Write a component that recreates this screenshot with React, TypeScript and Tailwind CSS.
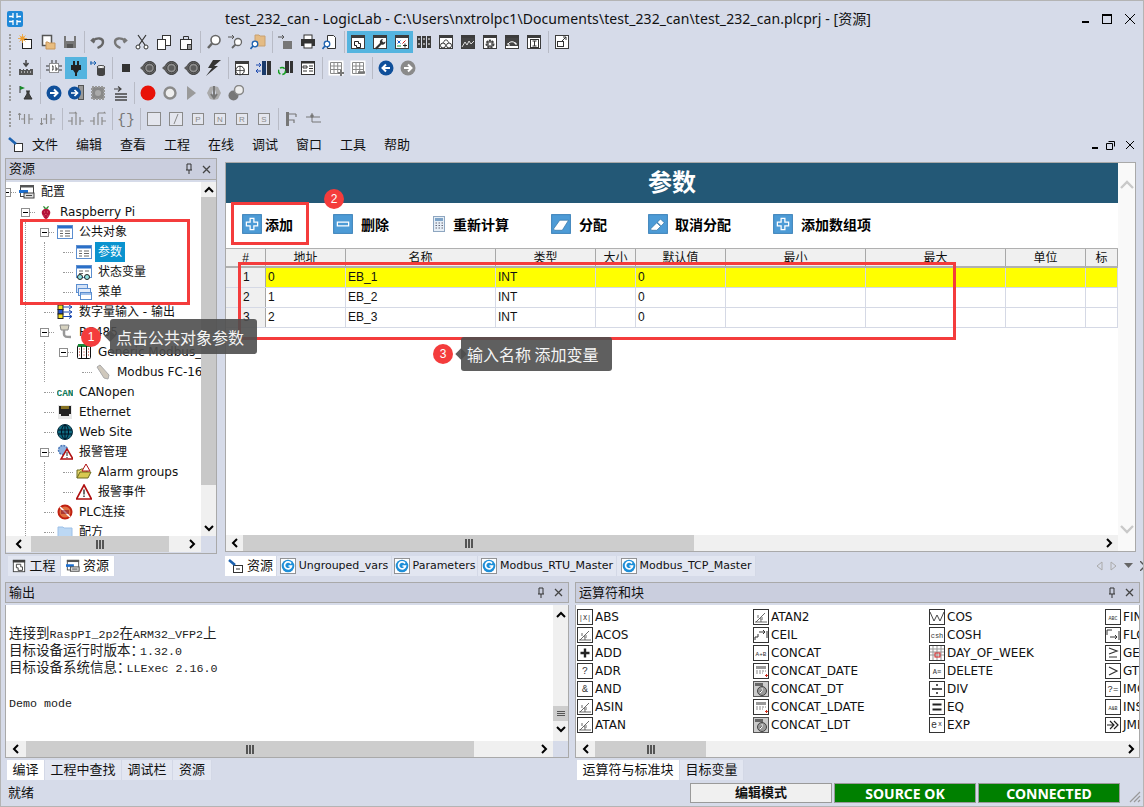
import React, { ReactNode } from "react";

const S = ({ c, size = 16 }: { c: ReactNode; size?: number }) => (
  <svg width={size} height={size} viewBox="0 0 16 16" className="block shrink-0">{c}</svg>
);
const D = "#3c3c3c";
const G = "#8a8a8a";
const win = (extra: ReactNode) => (
  <>
    <rect x="1.5" y="1.5" width="13" height="13" fill="#fff" stroke={D} />
    <rect x="1" y="1" width="14" height="3" fill={D} />
    {extra}
  </>
);
const gridI = (extra: ReactNode) => (
  <>
    <rect x="1" y="1" width="14" height="14" fill="#fff" stroke="#fff" />
    <path d="M2.5 2.5h11v11h-11zM2.5 6h11M2.5 9.5h11M6 2.5v11M9.7 2.5v11" fill="none" stroke={G} />
    {extra}
  </>
);
const disc = (
  <>
    <circle cx="9.500" cy="8" r="6.500" fill="#666" stroke="#333" />
    <circle cx="9.500" cy="8" r="4.800" fill="#8e8e8e" stroke="#333" strokeWidth=".8" />
    <circle cx="9.500" cy="8" r="2.800" fill="#5c5c5c" />
    <path d="M0 8l4-3.500v7z" fill="#5c5c5c" />
  </>
);
const lever = () => (
  <path d="M3 8h3.500M6.500 3v10M11 3v10M11 8h4" fill="none" stroke={G} strokeWidth="1.200" />
);
const boxL = (t: string) => (
  <>
    <rect x="2.5" y="2.5" width="11" height="11" fill="#e4e6ee" stroke={G} />
    <text x="8" y="11.3" fontSize="8" textAnchor="middle" fill={G} fontFamily="Liberation Sans">{t}</text>
  </>
);
const book = (
  <>
    <rect x="1" y="2" width="4" height="12" fill={D} />
    <rect x="6" y="2" width="4" height="12" fill={D} />
    <rect x="11" y="2" width="4" height="12" fill={D} />
    <path d="M2 10h2M7 10h2M12 10h2M2 5h2M7 5h2M12 5h2" stroke="#fff" />
  </>
);
const icons: Record<string, ReactNode> = {
  new: <><rect x="4.5" y="5.5" width="9" height="9" fill="#fff" stroke="#222" /><circle cx="4.5" cy="4.5" r="2.2" fill="#f0a030" /><path d="M4.5 0v9M0 4.5h9M1.5 1.5l6 6M7.5 1.5l-6 6" stroke="#f0a030" strokeWidth=".8" /></>,
  open: <><rect x="2.5" y="1.5" width="9" height="10" fill="#fff" stroke="#555" strokeWidth="1.5" /><path d="M6 8h2l1 1h6v6H6z" fill="#e8bd80" stroke="#c8965a" /></>,
  save: <><path d="M2 2h12v12H2z" fill="#777" /><rect x="4" y="2" width="8" height="5" fill="#d8dce8" /><rect x="5" y="10" width="6" height="4" fill="#555" /></>,
  undo: <path d="M4 4.5l-2 2 2.5 2M3 6.5c4-3 10-3 10 1.500 0 3-3 5-5.500 6" fill="none" stroke="#666" strokeWidth="2.400" />,
  redo: <path d="M12 4.5l2 2-2.500 2M13 6.500c-4-3-10-3-10 1.500 0 3 3 5 5.500 6" fill="none" stroke="#777" strokeWidth="2.400" />,
  cut: <><path d="M4 1l7 10M12 1L5 11" stroke="#333" fill="none" strokeWidth="1.200" /><circle cx="4" cy="13" r="2" fill="#fff" stroke="#333" /><circle cx="12" cy="13" r="2" fill="#fff" stroke="#333" /></>,
  copy: <><rect x="6.500" y="1.500" width="8" height="10" fill="#fff" stroke="#333" /><rect x="1.500" y="5.500" width="8" height="10" fill="#fff" stroke="#333" /></>,
  paste: <><rect x="2.500" y="5.500" width="11" height="10" fill="#fff" stroke="#333" /><path d="M5.500 6V2.500h5V6" fill="none" stroke="#333" /><rect x="9.500" y="10.500" width="4" height="5" fill="#999" stroke="#333" /></>,
  find: <><circle cx="9.500" cy="6" r="4.500" fill="#fff" stroke="#666" strokeWidth="1.600" /><path d="M6 9.500L2 14" stroke="#666" strokeWidth="2.500" /></>,
  findn: <><path d="M0 3h6M4 1l2 2-2 2" stroke="#555" fill="none" /><circle cx="10" cy="8" r="3.500" fill="#fff" stroke="#666" strokeWidth="1.300" /><path d="M7.500 10.500L4 14" stroke="#666" strokeWidth="1.800" /></>,
  findf: <><path d="M5 1h4l1 1h5v10H5z" fill="#e4bb84" stroke="#c8a070" /><circle cx="5" cy="10" r="2.800" fill="#fff" stroke="#1c62b0" strokeWidth="1.300" /><path d="M3 12l-2.500 3" stroke="#1c62b0" strokeWidth="1.600" /></>,
  imp: <><path d="M0 3h6M4 1l2 2-2 2" stroke="#555" fill="none" /><rect x="5" y="7" width="9" height="8" fill="#777" /></>,
  print: <><rect x="4" y="1" width="8" height="5" fill="#fff" stroke="#333" /><rect x="1" y="5" width="14" height="7" fill="#333" /><rect x="4" y="9" width="8" height="5" fill="#fff" stroke="#333" /></>,
  prev: <><path d="M5.500 1.500h6l2 2v11h-8z" fill="#fff" stroke="#333" /><circle cx="5" cy="10" r="2.800" fill="#fff" stroke="#1c62b0" strokeWidth="1.300" /><path d="M3 12l-2.500 3" stroke="#1c62b0" strokeWidth="1.600" /></>,
  wA: win(<path d="M4.500 7.500h4v2h2v4h-4v-2h-2z" fill="#fff" stroke="#222" />),
  wB: win(<path d="M11 5a3 3 0 0 0-3 4l-5 5 1.500 1.500 5-5a3 3 0 0 0 4-3l-2 1-1.500-1.500z" fill="#333" />),
  wC: win(<><path d="M3.500 6.500l3 3M6.500 6.500l-3 3" stroke="#1c5cd0" /><path d="M8.500 9.500l3-3" stroke="#d02020" /><path d="M3 12h4" stroke="#10a040" /><path d="M9 11.500h4M11 9.500v4" stroke="#222" /></>),
  books: book,
  wGl: win(<><circle cx="5" cy="11.500" r="2.500" fill="#fff" stroke="#333" /><circle cx="11" cy="11.500" r="2.500" fill="#fff" stroke="#333" /><path d="M5 9l2-3h2l2 3" fill="none" stroke="#555" /></>),
  wCh: win(<><rect x="2" y="4" width="12" height="10" fill="#444" /><path d="M2 13l3-5 2 3 2-4 2 3 3-3" fill="none" stroke="#ddd" /></>),
  wG: win(<><circle cx="8" cy="10" r="3.500" fill="#777" stroke="#444" strokeDasharray="2 1" strokeWidth="2" /><circle cx="8" cy="10" r="1.200" fill="#fff" /></>),
  wS: win(<><rect x="2" y="4" width="12" height="8" fill="#444" /><path d="M4 10c2-3 6-3 8 0M4 9v2h2M12 11v-2h-2" fill="none" stroke="#fff" /></>),
  wI: win(<><rect x="4.500" y="5.500" width="8" height="8" fill="#fff" stroke="#333" /><path d="M6.500 7h4M6.500 12h4M8.500 7v5" stroke="#333" /></>),
  ext: <><rect x="1.500" y="1.500" width="13" height="13" fill="#fff" stroke={D} /><rect x="3.500" y="7.500" width="6" height="5" fill="none" stroke="#333" /><path d="M8 7l4-4M9 3h3v3" fill="none" stroke="#333" /></>,
  dl: <><path d="M8 0v5M5.500 3L8 6l2.500-3" stroke="#444" fill="none" strokeWidth="1.500" /><path d="M1 15V9h2v1h2V9h1v1h2V9h2v1h2V9h3v6z" fill="#555" /><path d="M3 12h1M6 12h1M9 12h1M12 12h1" stroke="#fff" /></>,
  chip: <><rect x="3.500" y="3.500" width="9" height="9" fill="#fff" stroke="#333" strokeDasharray="1 1" /><path d="M0 6h3M0 10h3M13 6h3M13 10h3M6 0v3M10 0v3" stroke="#333" /><path d="M6 6h1v4H6M9 6h1M9 8h2v2H9" fill="none" stroke="#333" /></>,
  plug: <><rect x="3" y="5" width="10" height="5" fill="#222" /><rect x="5" y="1" width="2" height="4" fill="#222" /><rect x="9" y="1" width="2" height="4" fill="#222" /><path d="M5 10h6l-2 3v3H7v-3z" fill="#222" /></>,
  cyl: <><path d="M0 3h6M4 1l2 2-2 2M1 1v4" stroke="#1c62b0" fill="none" /><path d="M7 7h8v7a4 2 0 0 1-8 0z" fill="#444" /><ellipse cx="11" cy="7" rx="4" ry="1.500" fill="#fff" stroke="#444" /></>,
  stop: <rect x="4" y="4" width="8" height="8" fill="#333" />,
  disc,
  bolt: <path d="M15 0H7L2 8h4L0 16l12-10H8z" fill="#333" />,
  wWeb: win(<><circle cx="6" cy="10.500" r="4.300" fill="#fff" stroke="#222" /><path d="M1.700 10.500h8.600M6 6.200v8.600" stroke="#222" strokeWidth=".7" /></>),
  bBlue: <><rect x="6" y="1" width="4" height="14" fill="#1a3a6a" /><rect x="11" y="1" width="4" height="14" fill="#333" /><path d="M0 5h5M3 3L5 5l-2 2M5 11H0M2 9l-2 2 2 2" stroke="#1c4ab0" fill="none" /></>,
  bGreen: <><rect x="7" y="1" width="4" height="12" fill="#333" /><rect x="12" y="1" width="3" height="12" fill="#333" /><circle cx="4" cy="11" r="3.500" fill="none" stroke="#14a020" strokeWidth="1.500" strokeDasharray="5 2" /></>,
  form: <><rect x="1.500" y="1.500" width="13" height="13" fill="#fff" stroke="#333" /><rect x="1" y="1" width="14" height="2.500" fill="#333" /><path d="M3 6h4v2H3zM9 6h4M9 8.500h4M3 11h4M9 11h4" stroke="#333" fill="none" /></>,
  gridP: gridI(<path d="M10 13h6M13 10v6" stroke="#777" strokeWidth="2" />),
  gridM: gridI(<path d="M8 12.500h7" stroke="#777" strokeWidth="2.500" />),
  back: <><circle cx="8" cy="8" r="7.500" fill="#0f4f9a" /><path d="M12 8H5M8 4.500L4.500 8 8 11.500" stroke="#fff" strokeWidth="2" fill="none" /></>,
  fwd: <><circle cx="8" cy="8" r="7.500" fill="#8a8a8a" /><path d="M4 8h7M8 4.500L11.500 8 8 11.500" stroke="#fff" strokeWidth="2" fill="none" /></>,
  flask: <><path d="M2 1v7" stroke="#333" /><path d="M2 1l5 2-5 2z" fill="#1a8a2a" /><path d="M8 6h4M9 6v3l-3 5h8l-3-5V6" fill="#444" stroke="#333" /></>,
  fwdB: <><circle cx="8" cy="8" r="7.500" fill="#0f4f9a" /><path d="M4 8h7M8 4.500L11.500 8 8 11.500" stroke="#fff" strokeWidth="2" fill="none" /></>,
  fwdBar: <><rect x="10" y="0" width="6" height="15" fill="#555" /><rect x="11" y="1" width="4" height="13" fill="#999" /><circle cx="6.500" cy="8" r="6.500" fill="#0f4f9a" /><path d="M3 8h6M6.500 5L9.500 8 6.500 11" stroke="#fff" strokeWidth="1.700" fill="none" /></>,
  chipG: <><rect x="2" y="2" width="12" height="12" fill="#888" stroke="#999" strokeDasharray="2 1" strokeWidth="2" /><circle cx="8" cy="8" r="3" fill="#aaa" /></>,
  listA: <><path d="M2 4h7M6 1.500L9 4 6 6.500" stroke="#444" fill="none" strokeWidth="1.200" /><path d="M3 9h12M3 12h12M3 15h12" stroke="#444" strokeWidth="1.400" /></>,
  rec: <circle cx="8" cy="8" r="7.500" fill="#e81208" />,
  ring: <circle cx="8" cy="8" r="5.500" fill="#eee" stroke="#8a8a8a" strokeWidth="2.400" />,
  play: <path d="M3 1l9 7-9 7z" fill="#9a9a9a" />,
  into: <><path d="M4 2l-3 6 3 6 4 1-2-7 2-7z" fill="#aaa" /><path d="M12 2l3 6-3 6-4 1 2-7-2-7z" fill="#aaa" /><path d="M8 1v11M5 9l3 4 3-4" stroke="#777" fill="none" strokeWidth="2" /></>,
  balls: <><circle cx="5.500" cy="10.500" r="5" fill="#777" /><circle cx="11" cy="5" r="4.500" fill="#eee" stroke="#888" strokeWidth="1.500" /></>,
  c1: <>{lever()}<path d="M1.500 9V2M0 4l1.500-2L3 4" stroke={G} fill="none" /></>,
  c2: <>{lever()}<path d="M1.500 7v7M0 12l1.500 2L3 12" stroke={G} fill="none" /></>,
  c3: <path d="M1 2h7l-1-1M8 2V14M4 6v8M12 6v8M0 10h4M12 10h4" stroke={G} fill="none" strokeWidth="1.200" />,
  c4: <path d="M8 2h7l-1-1M8 2V14M4 6v8M12 6v8M0 10h4M12 10h4" stroke={G} fill="none" strokeWidth="1.200" />,
  brace: <text x="8" y="13" fontSize="15" textAnchor="middle" fill="#777" fontFamily="Liberation Mono">{"{}"}</text>,
  bEmpty: <rect x="1.500" y="1.500" width="13" height="13" fill="#e4e6ee" stroke={G} />,
  bSlash: <><rect x="1.500" y="1.500" width="13" height="13" fill="#e4e6ee" stroke={G} /><path d="M6 13l4-10" stroke={G} /></>,
  bP: boxL("P"), bN: boxL("N"), bR: boxL("R"), bS: boxL("S"),
  brk: <><rect x="2" y="1" width="3" height="14" fill="#777" /><path d="M5 3h7M12 3v3M5 9h5v3" stroke="#777" fill="none" strokeWidth="1.200" /></>,
  brk2: <><circle cx="6" cy="5" r="1.800" fill="#777" /><path d="M6 2v9h9M0 6h14" stroke="#777" fill="none" /></>,
};

const R1 = ["new","open","save","|","undo","redo","cut","copy","paste","|","find","findn","findf","|","imp","print","prev","|","*wA","*wB","*wC","books","wGl","wCh","wG","wS","wI","|","ext"];
const R2 = ["dl","|","chip","*plug","cyl","|","stop","disc","disc","disc","bolt","|","wWeb","bBlue","bGreen","form","|","gridP","gridM","|","back","fwd"];
const R3 = ["flask","|","fwdB","fwdBar","chipG","listA","|","rec","ring","play","into","balls"];
const R4 = ["c1","c2","|","c3","c4","|","brace","|","bEmpty","bSlash","bP","bN","bR","bS","|","brk","brk2"];

const Toolbar = ({ items, cls }: { items: string[]; cls: string }) => (
  <div className={"flex h-[22px] items-stretch pl-[8px] " + cls}>
    <div className="w-[4px] mr-[2px] my-[3px] border-l-2 border-dotted border-[#9a9a9a]" />
    {items.map((it, i) =>
      it === "|" ? (
        <div key={i} className="w-[6px] flex justify-center"><div className="w-px bg-[#b8bbc6]" /></div>
      ) : (
        <div key={i} className={"w-[22px] flex items-center justify-center " + (it[0] === "*" ? "bg-[#54b4df]" : "")}>
          <S c={icons[it.replace("*", "")]} />
        </div>
      )
    )}
  </div>
);

const tIcons: Record<string, ReactNode> = {
  config: <><rect x="1.500" y="1.500" width="13" height="11" fill="#fff" stroke="#444" /><rect x="1" y="1" width="14" height="2.500" fill="#555" /><rect x="0" y="6" width="9" height="3" fill="#1c6fd0" /><rect x="5" y="9" width="10" height="5" fill="#ddd" stroke="#444" /><path d="M7 11.500h6" stroke="#444" /></>,
  rasp: <><path d="M8 5c-3 0-5 2-4 5s3 5 4 5 3-2 4-5-1-5-4-5z" fill="#b3123a" /><path d="M5 2c1 0 3 1 3 3 0-2 2-3 3-3-1 3-2 3-3 3s-2 0-3-3z" fill="#2d8a2d" /><path d="M6 8h.8M9 8h.8M7.500 10.500h.8M5.500 12h.8M9.500 12h.8" stroke="#e88" /></>,
  table: <><rect x=".5" y="1.500" width="15" height="13" fill="#fff" stroke="#5b8ed0" /><rect x="1" y="2" width="14" height="2.500" fill="#2a6fc8" /><path d="M3 7h3M8 7h5M3 9.500h3M8 9.500h5M3 12h3M8 12h5" stroke="#666" /></>,
  gl: <><rect x=".5" y="1.500" width="15" height="12" fill="#fff" stroke="#5b8ed0" /><rect x="1" y="2" width="14" height="2.500" fill="#2a6fc8" /><path d="M3 7h4M9 7h4M3 9.500h4" stroke="#666" /><circle cx="4" cy="13" r="2.500" fill="#8fe0e0" stroke="#222" /><circle cx="11" cy="13" r="2.500" fill="#8fe0e0" stroke="#222" /></>,
  menu: <><rect x=".5" y=".5" width="11" height="8" fill="#d4e2f6" stroke="#5b8ed0" /><rect x="2.500" y="4.500" width="12" height="7" fill="#e4edfa" stroke="#5b8ed0" /><rect x="4.500" y="8.500" width="11" height="7" fill="#fff" stroke="#5b8ed0" /><rect x="5" y="9" width="10" height="2" fill="#9fc0ea" /></>,
  dig: <><rect x="1" y="1" width="5" height="4.500" fill="#f5e020" stroke="#222" /><rect x="1" y="5.500" width="5" height="4.500" fill="#2050d0" stroke="#222" /><rect x="1" y="10" width="5" height="4.500" fill="#f5e020" stroke="#222" /><path d="M6 3h9M6 8h9M6 12.500h9M12 1l3 2-3 2M12 6l3 2-3 2M12 10.500l3 2-3 2" stroke="#1c4ab0" fill="none" /></>,
  serial: <><path d="M3 1h9l-1 5H4z" fill="#d6d2c0" stroke="#888" /><path d="M7 6v4c0 3 2 3 7 3" fill="none" stroke="#999" strokeWidth="2.500" /></>,
  module: <><rect x="1.500" y="1.500" width="13" height="13" rx="1" fill="#fff" stroke="#111" /><rect x="2" y="0" width="12" height="3" fill="#1a8a3a" /><path d="M5.500 2v12M10.500 2v12" stroke="#111" /><path d="M3 5h1M3 8h1M3 11h1M7.500 5h1M7.500 8h1M7.500 11h1M12 5h1M12 8h1M12 11h1" stroke="#c03020" /></>,
  piece: <path d="M2 3l3-2 9 10-1 4-4-1z" fill="#cfc8bc" stroke="#aaa" />,
  can: <text x="8" y="11.500" fontSize="9.500" fontWeight="700" textAnchor="middle" fill="#0f7a5a" fontFamily="Liberation Mono">CAN</text>,
  eth: <><rect x="1" y="1" width="14" height="14" fill="#e8e8e8" /><path d="M2 2h12v8h-2v2H4v-2H2z" fill="#222" /><path d="M5 2v3M7 2v3M9 2v3M11 2v3" stroke="#e8c020" /></>,
  globe: <><circle cx="8" cy="8" r="7.500" fill="#0f6a80" stroke="#0a3040" /><ellipse cx="8" cy="8" rx="3.500" ry="7" fill="none" stroke="#012" /><path d="M1 6h14M1 10h14M8 1v14" stroke="#012" /></>,
  alarm: <><circle cx="6" cy="6" r="4.500" fill="#8fb2e0" stroke="#4a78b8" strokeWidth="1.500" strokeDasharray="2 1" /><path d="M10 5l6 10H4z" fill="#fff" stroke="#b01010" strokeWidth="1.500" /><path d="M10 8v4M10 13v1" stroke="#222" /></>,
  alarmg: <><path d="M1 14V6h3l1-1h6v3" fill="#e8d870" stroke="#6a6a20" /><path d="M1 14l3-6h11l-3 6z" fill="#d8c850" stroke="#6a6a20" /><path d="M10 0l4 7H6z" fill="#fff" stroke="#b01010" /></>,
  warn: <><path d="M8 1l7.500 14H.5z" fill="#fff" stroke="#b01010" strokeWidth="1.600" /><path d="M8 5.500v5M8 11.500v1.500" stroke="#222" strokeWidth="1.300" /></>,
  noent: <><circle cx="8" cy="8" r="6.500" fill="#e07040" stroke="#c02010" strokeWidth="2" /><path d="M3 3l10 10" stroke="#fff" strokeWidth="1.500" /><rect x="4" y="6" width="8" height="4" fill="#702" opacity=".5" /></>,
  folder: <path d="M1 15V3h5l1 1h8v11z" fill="#bcd8f4" stroke="#9cc0e8" />,
};

type Row = { d: number; ex?: boolean; ic: string; t: string; sel?: boolean };
const tree: Row[] = [
  { d: 0, ex: true, ic: "config", t: "配置" },
  { d: 1, ex: true, ic: "rasp", t: "Raspberry Pi" },
  { d: 2, ex: true, ic: "table", t: "公共对象" },
  { d: 3, ic: "table", t: "参数", sel: true },
  { d: 3, ic: "gl", t: "状态变量" },
  { d: 3, ic: "menu", t: "菜单" },
  { d: 2, ic: "dig", t: "数字量输入 - 输出" },
  { d: 2, ex: true, ic: "serial", t: "RS485" },
  { d: 3, ex: true, ic: "module", t: "Generic Modbus_RTU" },
  { d: 4, ic: "piece", t: "Modbus FC-16" },
  { d: 2, ic: "can", t: "CANopen" },
  { d: 2, ic: "eth", t: "Ethernet" },
  { d: 2, ic: "globe", t: "Web Site" },
  { d: 2, ex: true, ic: "alarm", t: "报警管理" },
  { d: 3, ic: "alarmg", t: "Alarm groups" },
  { d: 3, ic: "warn", t: "报警事件" },
  { d: 2, ic: "noent", t: "PLC连接" },
  { d: 2, ic: "folder", t: "配方" },
];

const TreeRow = ({ r, i }: { r: Row; i: number }) => (
  <div className="flex h-[20px] items-center whitespace-nowrap">
    {Array.from({ length: r.d }).map((_, lv) => (
      <div key={lv} className="w-[19px] h-full shrink-0 pl-[9px]">
        {lv === 1 && i >= 2 ? <div className="h-full border-l border-dotted border-[#9a9a9a]" /> : null}
        {lv === 2 && r.d >= 3 ? <div className="h-full border-l border-dotted border-[#9a9a9a]" /> : null}
      </div>
    ))}
    <div className="w-[19px] h-full shrink-0 flex items-center relative">
      <div className="w-full ml-[9px] border-t border-dotted border-[#9a9a9a]" />
      {r.ex && (
        <div className="absolute left-[5px] top-[6px] w-[9px] h-[9px] border border-[#8e8e8e] bg-white flex items-center justify-center">
          <div className="w-[5px] h-px bg-black" />
        </div>
      )}
    </div>
    <div className="ml-[3px] mr-[6px] w-[16px] shrink-0"><S c={tIcons[r.ic]} /></div>
    <span className={r.sel ? "bg-[#0a93cf] text-white px-[3px] -ml-[3px] leading-[20px]" : ""}>{r.t}</span>
  </div>
);

const Arrow = ({ dir, color = "#000" }: { dir: "u" | "d" | "l" | "r"; color?: string }) => {
  const d = { u: "M2 8l4-4 4 4", d: "M2 4l4 4 4-4", l: "M8 2L4 6l4 4", r: "M4 2l4 4-4 4" }[dir];
  return <svg width="12" height="12" viewBox="0 0 12 12" className="block"><path d={d} fill="none" stroke={color} strokeWidth="2" /></svg>;
};

const Grip = () => <div className="w-[8px] h-[9px] border-x-2 border-[#555] flex justify-center"><div className="w-[2px] bg-[#555]" /></div>;

const HScroll = ({ left, thumb, rest }: { left: number; thumb: number; rest: number }) => (
  <div className="flex h-[16px] bg-[#f0f0f0] items-stretch">
    <div className="flex items-center justify-center" style={{ width: left }}><Arrow dir="l" /></div>
    <div className="bg-[#cdcdcd] flex items-center justify-center" style={{ width: thumb }}><Grip /></div>
    <div className="flex-1 flex items-center justify-end" style={{ paddingRight: rest }}><Arrow dir="r" /></div>
  </div>
);

const PanelHead = ({ t, cls }: { t: string; cls: string }) => (
  <div className={"h-[21px] bg-[#cacede] border border-[#a9a9a9] flex items-center pl-[3px] pr-[5px] text-[13px] " + cls}>
    <span className="flex-1">{t}</span>
    <svg width="10" height="12" viewBox="0 0 10 12" className="mr-[8px]"><path d="M3 1v6M7 1v6M2 7h6M5 7v4M3 1h4" stroke="#333" fill="none" /></svg>
    <svg width="9" height="9" viewBox="0 0 9 9"><path d="M1 1l7 7M8 1L1 8" stroke="#444" strokeWidth="1.300" /></svg>
  </div>
);

const Tab = ({ t, w, on, ic, cls = "text-[13px]" }: { t: string; w: number; on?: boolean; ic?: ReactNode; cls?: string }) => (
  <div className={"h-[20px] flex items-center justify-center gap-[3px] border-r border-[#d3d8e6] whitespace-nowrap " + cls + " " + (on ? "bg-white" : "bg-[#e2e6f1]")} style={{ width: w }}>
    {ic}
    <span>{t}</span>
  </div>
);

const G_ICON = (
  <S c={<><rect x=".5" y=".5" width="15" height="15" fill="#fff" stroke="#333" strokeDasharray="1 1" /><circle cx="8" cy="8" r="6.300" fill="#1e8fd8" /><path d="M11 5.500A3.500 3.500 0 1 0 11.500 8H8.500" fill="none" stroke="#fff" strokeWidth="1.700" /></>} />
);
const DOC_ICON = <S c={<><rect x="5.500" y="7.500" width="9" height="7" fill="#fff" stroke="#333" /><path d="M1 2l6 5" stroke="#1c62b0" strokeWidth="2.600" /><path d="M8 11h4" stroke="#333" /></>} />;

const cols = [40, 80, 150, 100, 40, 90, 140, 140, 80, 32];
const headers = ["#", "地址", "名称", "类型", "大小", "默认值", "最小", "最大", "单位", "标"];
const rows = [["1", "0", "EB_1", "INT", "", "0"], ["2", "1", "EB_2", "INT", "", "0"], ["3", "2", "EB_3", "INT", "", "0"]];

const Plus = () => <S size={20} c={<><rect x=".5" y=".5" width="15" height="15" fill="#4d9bd6" stroke="#3a80b8" strokeWidth=".8" /><path d="M6.500 3.500h3v3h3v3h-3v3h-3v-3h-3v-3h3z" fill="#4d9bd6" stroke="#fff" strokeWidth="1" /></>} />;
const Minus = () => <S size={20} c={<><rect x=".5" y=".5" width="15" height="15" fill="#4d9bd6" stroke="#3a80b8" strokeWidth=".8" /><rect x="3.500" y="6.500" width="9" height="3" fill="#4d9bd6" stroke="#fff" /></>} />;
const Calc = () => <S size={16} c={<><rect x="2.500" y=".5" width="11" height="15" fill="#e6eef6" stroke="#8ea6c0" /><rect x="4" y="2" width="8" height="3" fill="#7fa4c8" /><path d="M4.500 7h1.500M7.500 7H9M10.500 7H12M4.500 9.500H6M7.500 9.500H9M10.500 9.500H12M4.500 12H6M7.500 12H9M10.500 12H12" stroke="#667" /></>} />;
const Assign = ({ un }: { un?: boolean }) => <S size={20} c={<><rect x=".5" y=".5" width="15" height="15" fill="#4d9bd6" stroke="#3a80b8" strokeWidth=".8" /><path d={un ? "M2 12l5-5 3 3-3 3H3zM7.500 6.500L10 4l3 3-2.500 2.500z" : "M2 12l5-7h7l-5 8H3z"} fill="#fff" stroke="#2a6a9a" strokeWidth=".5" /></>} />;

const Action = ({ icon, t, w, gap }: { icon: ReactNode; t: string; w: number; gap: number }) => (
  <div className="flex items-center shrink-0" style={{ width: w }}>
    <div style={{ marginRight: gap }}>{icon}</div>
    <span className="font-bold text-[14px] whitespace-nowrap">{t}</span>
  </div>
);

const box = (c: ReactNode) => <S c={<><rect x=".5" y=".5" width="15" height="15" fill="#fff" stroke="#333" />{c}</>} />;
const angle = <path d="M2 13h12M3 13l9-9M8 13a5 5 0 0 0-1-4M5 6v3M9 8v3" fill="none" stroke="#444" strokeWidth=".8" />;
const tx = (t: string, s = 7) => <text x="8" y="11" fontSize={s} textAnchor="middle" fill="#333" fontFamily="Liberation Mono">{t}</text>;
const cal = <><rect x="3" y="3" width="10" height="3" fill="#999" /><path d="M3 8h10M3 10h7" stroke="#888" strokeDasharray="2 1" /><path d="M12 12.500h3M13.500 11v3" stroke="#d03020" /></>;
const calT = <S c={<><rect x=".5" y=".5" width="15" height="15" fill="#ccc" stroke="#555" /><rect x="2" y="2" width="8" height="3" fill="#666" /><circle cx="9" cy="10" r="4.500" fill="#999" stroke="#444" /><path d="M9 7v3l-2 2" stroke="#fff" /></>} />;
const ops: [ReactNode, string][][] = [
  [[box(tx("|X|")), "ABS"], [box(angle), "ACOS"], [box(<path d="M8 3.500v9M3.500 8h9" stroke="#222" strokeWidth="2.400" />), "ADD"], [box(tx("?", 10)), "ADR"], [box(tx("&", 10)), "AND"], [box(angle), "ASIN"], [box(angle), "ATAN"]],
  [[box(angle), "ATAN2"], [box(<path d="M2 13v-3h3V7M6 5h6M10 3l2 2-2 2M14 4v7" fill="none" stroke="#333" />), "CEIL"], [box(tx("A+B", 6)), "CONCAT"], [box(cal), "CONCAT_DATE"], [calT, "CONCAT_DT"], [box(cal), "CONCAT_LDATE"], [calT, "CONCAT_LDT"]],
  [[box(<path d="M1 3l4 9 3-6 3 6 4-9" fill="none" stroke="#333" strokeWidth=".9" />), "COS"], [box(tx("csh", 7)), "COSH"], [box(<><path d="M1 4h14M1 7h14M1 10h14M4 1v14M8 1v14M12 1v14" stroke="#999" /><rect x="6" y="8" width="5" height="4" fill="none" stroke="#d02020" /></>), "DAY_OF_WEEK"], [box(tx("A≡", 7)), "DELETE"], [box(<path d="M3 8h10M8 3v2M8 11v2" stroke="#222" strokeWidth="1.500" />), "DIV"], [box(<path d="M3.500 5.500h9M3.500 10.500h9" stroke="#222" strokeWidth="2" />), "EQ"], [box(tx("eˣ", 10)), "EXP"]],
  [[box(tx("ABC", 5)), "FIND"], [box(<path d="M2 8V3h5M5 10h7M10 8l2 2-2 2M14 4v9" fill="none" stroke="#333" />), "FLOOR"], [box(<path d="M4 3l8 3-8 3M4 12h8" fill="none" stroke="#333" strokeWidth="1.200" />), "GE"], [box(<path d="M4 4l8 4-8 4" fill="none" stroke="#333" strokeWidth="1.200" />), "GT"], [box(tx("?=", 9)), "IMOVE"], [box(tx("A&B", 5)), "INSERT"], [box(<path d="M2 8h6M5 4l4 4-4 4M9 4l4 4-4 4" fill="none" stroke="#222" strokeWidth="1.200" />), "JMP"]],
];

const Mono = ({ t, cls = "" }: { t: string; cls?: string }) => <span className={"font-['Liberation_Mono',monospace] text-[11.670px] " + cls}>{t}</span>;

const Badge = ({ left, top, n }: { left: number; top: number; n: string }) => (
  <div className="absolute w-[20px] h-[20px] rounded-full bg-[#f43c3c] text-white text-[12px] flex items-center justify-center font-['Liberation_Sans',sans-serif]" style={{ left, top }}>{n}</div>
);
const Tip = ({ left, top, w, h, t }: { left: number; top: number; w: number; h: number; t: string }) => (
  <div className="absolute rounded-[3px] bg-[#4e4e4e]/90 text-[#f4f4f4] text-[16px] flex items-center pl-[6px] whitespace-nowrap font-['Noto_Sans_CJK_SC',sans-serif]" style={{ left, top, width: w, height: h }}>
    <div className="absolute left-[-4px] top-[13px] w-[8px] h-[8px] rotate-45 bg-[#4e4e4e]/90" />
    {t}
  </div>
);

export default function App() {
  const ui = "font-['DejaVu_Sans','Noto_Sans_CJK_SC',sans-serif]";
  return (
    <div className={"relative w-[1144px] h-[807px] overflow-hidden bg-[#d6dbe9] border border-[#b4b4b4] text-[#111] text-[12px] box-border " + ui}>
      {/* Title */}
      <div className="h-[30px] flex items-center">
        <div className="ml-[6px] mt-[6px] w-[16px] h-[16px] rounded-[2px] bg-[#1e88d8] flex items-center justify-center">
          <svg width="12" height="12" viewBox="0 0 12 12"><path d="M4 0v5M4 7v5M8 0v5M8 7v5M0 3.500h4M8 3.500h4M0 8.500h4M8 8.500h4" stroke="#fff" strokeWidth="1.300" fill="none" /></svg>
        </div>
        <div className="ml-[202px] mt-[5px] font-['Noto_Sans','Noto_Sans_CJK_SC',sans-serif] text-[14px] tracking-[0.08px] whitespace-nowrap">test_232_can - LogicLab - C:\Users\nxtrolpc1\Documents\test_232_can\test_232_can.plcprj - [资源]</div>
        <div className="ml-auto mr-[8px] mt-[5px] flex items-center gap-[13px]">
          <div className="w-[7px] h-[2px] bg-black mt-[6px]" />
          <div className="w-[10px] h-[10px] border border-black border-t-2" />
          <svg width="10" height="10" viewBox="0 0 10 10"><path d="M0 0l10 10M10 0L0 10" stroke="#000" /></svg>
        </div>
      </div>
      {/* Toolbars */}
      <Toolbar items={R1} cls="" />
      <Toolbar items={R2} cls="mt-[4px]" />
      <Toolbar items={R3} cls="mt-[3px]" />
      <Toolbar items={R4} cls="mt-[4px]" />
      {/* Menu */}
      <div className="h-[22px] mt-[4px] flex items-center text-[13px] font-['Noto_Sans','Noto_Sans_CJK_SC',sans-serif]">
        <div className="ml-[7px] w-[24px]">
          <S c={<><rect x="6.500" y="6.500" width="8" height="8" fill="#fff" stroke="#333" /><path d="M1 1l7 6" stroke="#1c62b0" strokeWidth="2.600" /></>} />
        </div>
        {["文件", "编辑", "查看", "工程", "在线", "调试", "窗口", "工具", "帮助"].map((m) => (
          <div key={m} className="w-[44px] shrink-0">{m}</div>
        ))}
        <div className="ml-auto mr-[9px] flex items-center gap-[8px]">
          <div className="w-[6px] h-[2px] bg-black mt-[6px]" />
          <svg width="9" height="9" viewBox="0 0 9 9"><path d="M2.500.5h6v5M.5 2.500h6v6h-6z" fill="none" stroke="#000" /></svg>
          <svg width="8" height="8" viewBox="0 0 8 8" className="ml-[3px]"><path d="M0 0l8 8M8 0L0 8" stroke="#000" /></svg>
        </div>
      </div>
      {/* Middle */}
      <div className="flex mt-[2px] h-[424px] items-start">
        {/* Left panel */}
        <div className="ml-[4px] w-[212px]">
          <div className="border border-[#a9a9a9] h-[396px] flex flex-col">
            <PanelHead t="资源" cls="border-0 border-b" />
            <div className="flex-1 mt-[2px] flex flex-col min-h-0">
              <div className="flex flex-1 min-h-0">
                <div className="flex-1 bg-white overflow-hidden min-w-0">
                  <div className="-ml-[9px]">
                    {tree.map((r, i) => <TreeRow key={i} r={r} i={i} />)}
                  </div>
                </div>
                <div className="w-[15px] flex flex-col bg-[#f0f0f0]">
                  <div className="h-[15px] flex items-center justify-center"><Arrow dir="u" /></div>
                  <div className="h-[288px] bg-[#c8c8c8]" />
                  <div className="flex-1 flex items-end justify-center pb-[2px]"><Arrow dir="d" /></div>
                </div>
              </div>
              <div className="flex h-[17px]">
                <div className="flex-1"><HScroll left={25} thumb={138} rest={3} /></div>
                <div className="w-[15px]" />
              </div>
            </div>
          </div>
          <div className="flex mt-[2px] ml-[3px]">
            <Tab t="工程" w={53} ic={<S size={14} c={win(<path d="M5 6h5v3h2v4H7v-3H5z" fill="none" stroke="#333" />)} />} />
            <Tab t="资源" w={54} on ic={<S size={14} c={tIcons.config} />} />
          </div>
        </div>
        {/* Doc */}
        <div className="ml-[8px] w-[911px]">
          <div className="border border-[#a9a9a9] h-[390px] mt-[4px] flex bg-white">
            <div className="flex-1 flex flex-col min-w-0">
              <div className="h-[40px] bg-[#235876] text-white text-[24px] font-bold flex items-center justify-center pb-[4px] font-['Noto_Sans_CJK_SC',sans-serif]">参数</div>
              <div className="h-[45px] flex items-center pl-[16px] pb-[3px] font-['Noto_Sans_CJK_SC',sans-serif] text-black">
                <Action icon={<Plus />} t="添加" w={91} gap={3} />
                <Action icon={<Minus />} t="删除" w={98} gap={8} />
                <Action icon={<Calc />} t="重新计算" w={120} gap={6} />
                <Action icon={<Assign />} t="分配" w={97} gap={8} />
                <Action icon={<Assign un />} t="取消分配" w={125} gap={7} />
                <Action icon={<Plus />} t="添加数组项" w={140} gap={8} />
              </div>
              <div className="flex-1 min-h-0 overflow-hidden font-['Liberation_Sans','Noto_Sans_CJK_SC',sans-serif] text-[12px] text-[#111]">
                <div className="flex h-[20px] box-border bg-[#f0f0f0] border-t border-b-2 border-[#b0b0b0]">
                  {headers.map((h, i) => (
                    <div key={i} className="border-r border-[#a8a8a8] text-center leading-[18px] shrink-0 box-border whitespace-nowrap overflow-hidden" style={{ width: cols[i] }}>{h}</div>
                  ))}
                </div>
                {rows.map((r, ri) => (
                  <div key={ri} className={"flex h-[20px] border-b border-[#d5d9e5] " + (ri === 0 ? "bg-[#ffff00]" : "bg-white")}>
                    {cols.map((w, i) => (
                      <div key={i} className={"shrink-0 border-r leading-[19px] box-border " + (i === 0 ? "bg-[#f0f0f0] border-[#a8a8a8] pl-[17px]" : "border-[#d5d9e5] pl-[2px]")} style={{ width: w }}>{r[i] ?? ""}</div>
                    ))}
                  </div>
                ))}
              </div>
              <HScroll left={17} thumb={451} rest={3} />
            </div>
            <div className="w-[17px] bg-[#f9f9f9] flex flex-col items-center justify-between pt-[17px] pb-[17px]">
              <svg width="14" height="10" viewBox="0 0 14 10"><path d="M1 8l6-6 6 6" fill="none" stroke="#c9c9c9" strokeWidth="2.400" /></svg>
              <svg width="14" height="10" viewBox="0 0 14 10"><path d="M1 2l6 6 6-6" fill="none" stroke="#c9c9c9" strokeWidth="2.400" /></svg>
            </div>
          </div>
          <div className="flex items-center mt-[4px]">
            <Tab t="资源" w={52} on ic={DOC_ICON} />
            <Tab t="Ungrouped_vars" w={115} ic={G_ICON} cls="text-[11px]" />
            <Tab t="Parameters" w={86} ic={G_ICON} cls="text-[11px]" />
            <Tab t="Modbus_RTU_Master" w={139} ic={G_ICON} cls="text-[11px]" />
            <Tab t="Modbus_TCP_Master" w={139} ic={G_ICON} cls="text-[11px]" />
            <div className="ml-auto flex items-center gap-[7px] -mr-[14px]">
              <svg width="7" height="10" viewBox="0 0 7 10"><path d="M6 1L1 5l5 4z" fill="#d6dbe9" stroke="#aaa" /></svg>
              <svg width="7" height="10" viewBox="0 0 7 10"><path d="M1 1l5 4-5 4z" fill="#d6dbe9" stroke="#aaa" /></svg>
              <svg width="9" height="6" viewBox="0 0 9 6"><path d="M0 0h9L4.500 5z" fill="#666" /></svg>
              <svg width="10" height="10" viewBox="0 0 10 10"><path d="M0 0l10 10M10 0L0 10" stroke="#555" strokeWidth="1.300" /></svg>
            </div>
          </div>
        </div>
      </div>
      {/* Bottom panels */}
      <div className="flex h-[201px] items-start">
        <div className="ml-[4px] w-[564px]">
          <PanelHead t="输出" cls="" />
          <div className="mt-[2px] border border-t-0 border-[#a9a9a9] h-[153px] flex flex-col">
            <div className="flex flex-1 min-h-0">
              <div className="flex-1 bg-white pl-[3px] pt-[19px] text-[#222] text-[13.500px] font-['Noto_Sans_CJK_SC',monospace] whitespace-pre">
                <div className="h-[17px] leading-[17px]">连接到<Mono t="RaspPI_2p2" />在<Mono t="ARM32_VFP2" />上</div>
                <div className="h-[17px] leading-[17px]">目标设备运行时版本：<Mono t="1.32.0" cls="-ml-[4px]" /></div>
                <div className="h-[17px] leading-[17px]">目标设备系统信息：<Mono t="LLExec 2.16.0" cls="-ml-[4px]" /></div>
                <div className="h-[18px]" />
                <div className="h-[17px] leading-[17px]"><Mono t="Demo mode" /></div>
              </div>
              <div className="w-[15px] bg-[#f0f0f0] flex flex-col items-center">
                <div className="h-[20px] flex items-center"><Arrow dir="u" /></div>
                <div className="mt-[81px] h-[15px] w-full bg-[#cdcdcd] flex flex-col items-center justify-center gap-px"><div className="w-[8px] h-px bg-[#555]" /><div className="w-[8px] h-px bg-[#555]" /><div className="w-[8px] h-px bg-[#555]" /></div>
                <div className="mt-[2px]"><Arrow dir="d" /></div>
              </div>
            </div>
            <div className="flex"><div className="flex-1"><HScroll left={20} thumb={448} rest={3} /></div><div className="w-[15px] bg-[#d6dbe9]" /></div>
          </div>
          <div className="flex mt-[2px] ml-[2px]">
            <Tab t="编译" w={38} on />
            <Tab t="工程中查找" w={77} />
            <Tab t="调试栏" w={51} />
            <Tab t="资源" w={39} />
          </div>
        </div>
        <div className="ml-[6px] w-[565px]">
          <PanelHead t="运算符和块" cls="" />
          <div className="mt-[2px] border border-t-0 border-[#a9a9a9] h-[153px] flex flex-col">
            <div className="flex-1 bg-white flex pl-[1px] overflow-hidden min-h-0 pt-[3px]">
              {ops.map((col, ci) => (
                <div key={ci} className="w-[176px] shrink-0">
                  {col.map(([ic, t], ri) => (
                    <div key={ri} className="h-[18px] flex items-center gap-[2px] whitespace-nowrap">{ic}<span>{t}</span></div>
                  ))}
                </div>
              ))}
            </div>
            <HScroll left={19} thumb={111} rest={2} />
          </div>
          <div className="flex mt-[2px] ml-[2px]">
            <Tab t="运算符与标准块" w={103} on />
            <Tab t="目标变量" w={64} />
          </div>
        </div>
      </div>
      {/* Status */}
      <div className="flex h-[20px] items-center text-[13px] font-['Noto_Sans','Noto_Sans_CJK_SC',sans-serif]">
        <div className="ml-[7px] w-[682px]">就绪</div>
        <div className="w-[142px] h-full bg-[#f0f0f0] border border-[#9a9a9a] flex items-center justify-center font-bold">编辑模式</div>
        <div className="ml-[2px] w-[142px] h-full bg-[#008000] border border-[#9a9a9a] text-white text-[14px] font-bold flex items-center justify-center">SOURCE OK</div>
        <div className="ml-[2px] w-[142px] h-full bg-[#008000] border border-[#9a9a9a] text-white text-[14px] font-bold flex items-center justify-center">CONNECTED</div>
        <svg width="12" height="12" viewBox="0 0 12 12" className="ml-[9px] mt-[7px]"><path d="M11 1L1 11M11 5l-6 6M11 9l-2 2" stroke="#999" strokeWidth="1.200" /></svg>
      </div>
      {/* Annotations */}
      <div className="absolute left-[19px] top-[218px] w-[170px] h-[86px] border-[3px] border-[#f43c3c]" />
      <div className="absolute left-[230px] top-[201px] w-[78px] h-[43px] border-[3px] border-[#f43c3c]" />
      <div className="absolute left-[237px] top-[261px] w-[718px] h-[78px] border-[3px] border-[#f43c3c]" />
      <Tip left={109} top={318} w={147} h={35} t="点击公共对象参数" />
      <Tip left={460} top={336} w={151} h={34} t="输入名称 添加变量" />
      <Badge left={80} top={326} n="1" />
      <Badge left={323} top={188} n="2" />
      <Badge left={432} top={343} n="3" />
    </div>
  );
}
